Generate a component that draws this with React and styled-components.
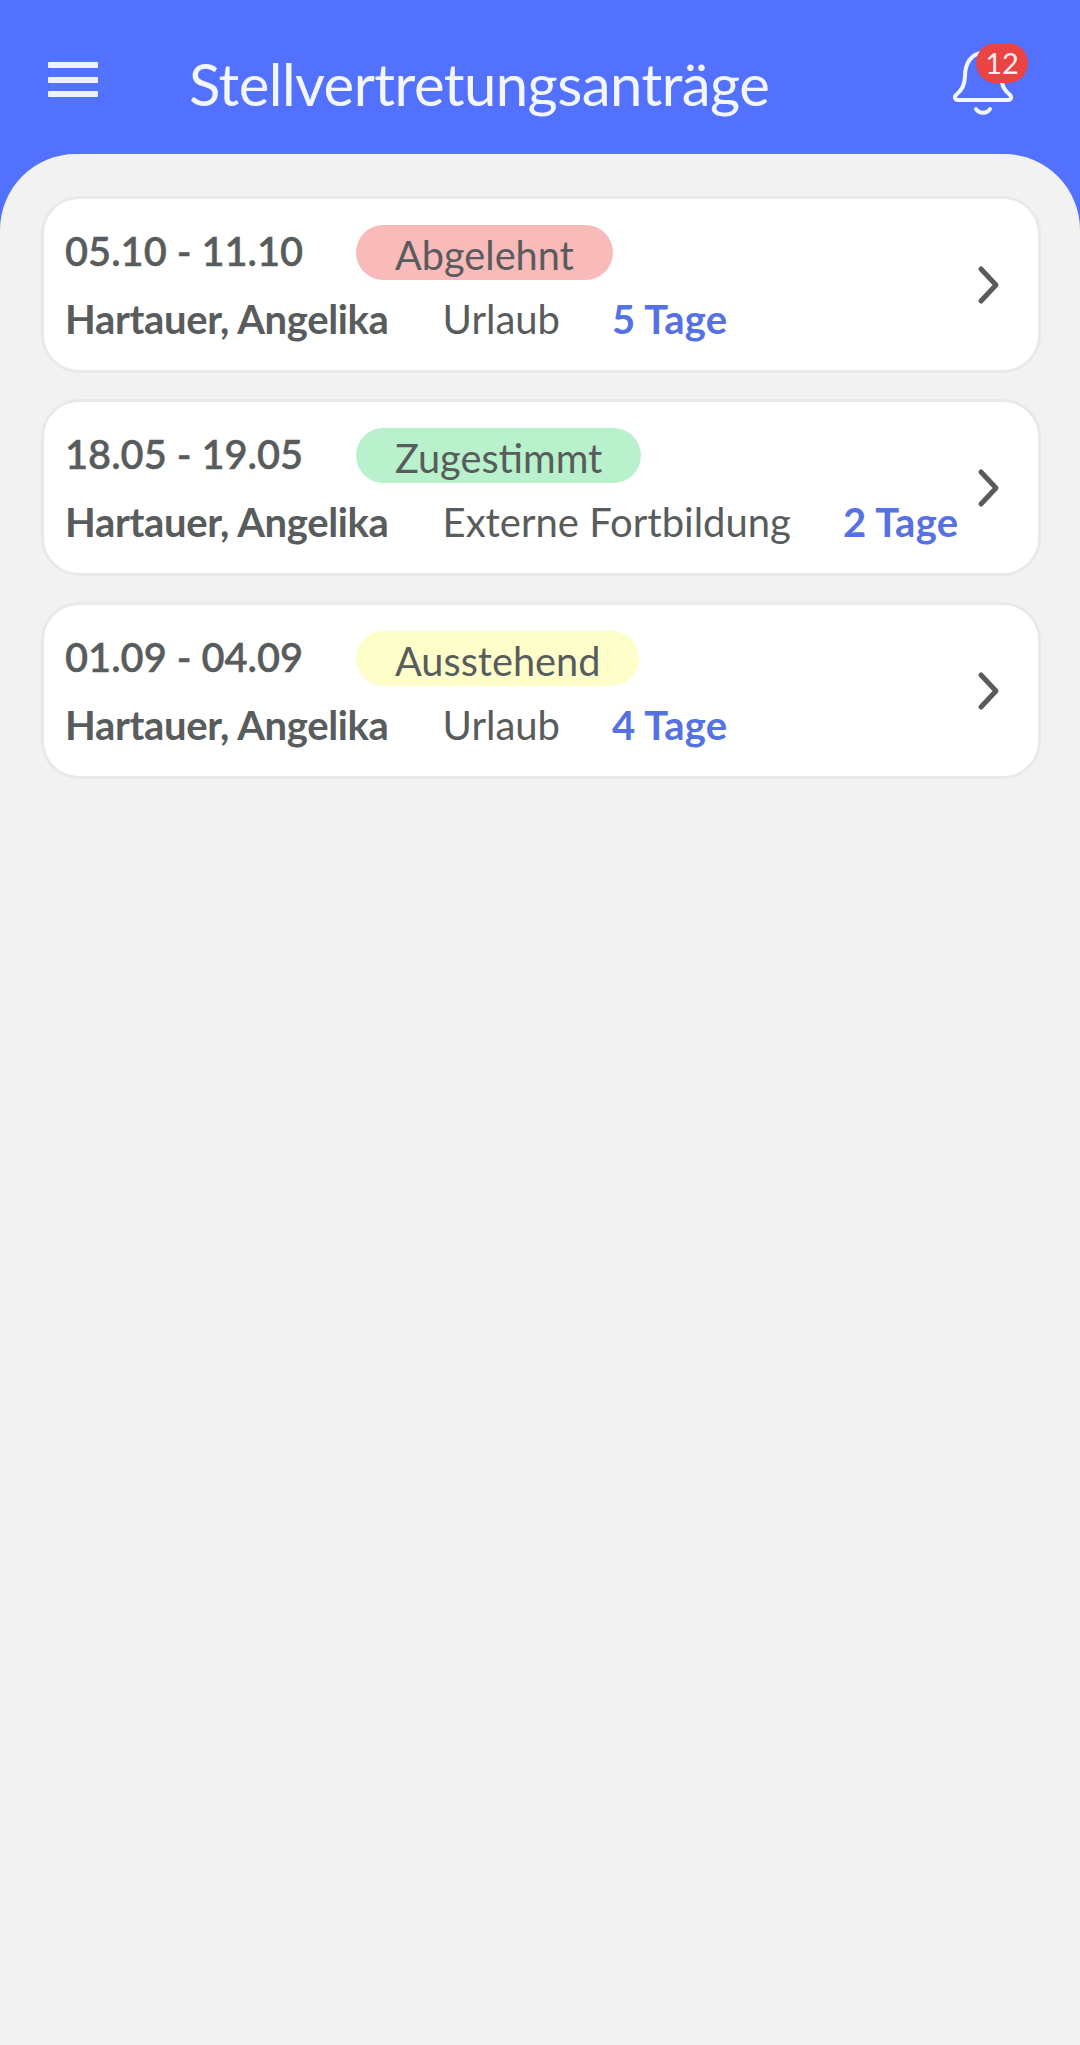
import React from "react";
import styled, { createGlobalStyle } from "styled-components";

const Global = createGlobalStyle`
  html, body { margin: 0; padding: 0; background: #f2f2f2; }
  body { font-family: Lato, "Open Sans", sans-serif; }
`;

const Page = styled.div`
  width: 1080px;
  height: 2045px;
  background: #5271ff;
  display: flex;
  flex-direction: column;
  overflow: hidden;
`;

const Header = styled.header`
  height: 154px;
  flex: none;
  display: flex;
  align-items: center;
  padding: 0 66px 0 48px;
  box-sizing: border-box;
  color: #f4f6ff;
`;

const MenuButton = styled.div`
  width: 50px;
  height: 35px;
  margin-top: 5px;
  flex: none;
  display: flex;
  flex-direction: column;
  justify-content: space-between;
`;

const MenuLine = styled.span`
  display: block;
  height: 6px;
  border-radius: 1px;
  background: #eef1ff;
`;

const Title = styled.h1`
  margin: 13px 0 0 91px;
  flex: 1;
  font-size: 58px;
  line-height: 70px;
  font-weight: 400;
  letter-spacing: -0.55px;
  white-space: nowrap;
`;

const Bell = styled.div`
  position: relative;
  width: 62px;
  height: 70px;
  margin-top: 11px;
  flex: none;
`;

const Badge = styled.span`
  position: absolute;
  top: -5px;
  right: -14px;
  width: 52px;
  height: 40px;
  border-radius: 20px;
  background: #ea4343;
  color: #fbeeee;
  font-size: 29px;
  line-height: 40px;
  text-align: center;
`;

const Panel = styled.main`
  flex: 1;
  background: #f2f2f2;
  border-radius: 76px 76px 0 0;
  padding: 42px 39px 0 41px;
  display: flex;
  flex-direction: column;
  gap: 26px;
`;

const Card = styled.article`
  height: 177px;
  box-sizing: border-box;
  background: #fff;
  border: 3px solid #e9e9e9;
  border-radius: 38px;
  padding: 0 37px 0 21px;
  display: flex;
  align-items: center;
  color: #585c5c;
`;

const CardBody = styled.div`
  flex: 1;
  align-self: flex-start;
  padding-top: 26px;
  display: flex;
  flex-direction: column;
  gap: 14px;
`;

const TopRow = styled.div`
  display: flex;
  align-items: center;
  height: 55px;
`;

const DateText = styled.span`
  width: 291px;
  font-size: 39.8px;
  font-weight: 600;
  line-height: 50px;
  margin-top: -3px;
  -webkit-text-stroke: 0.35px #585c5c;
`;

const Status = styled.span`
  height: 55px;
  padding: 0 39px;
  border-radius: 28px;
  background: ${(p) => p.$bg};
  font-size: 39.7px;
  line-height: 59px;
`;

const BottomRow = styled.div`
  display: flex;
  gap: 54px;
  height: 50px;
  align-items: center;
  font-size: 40px;
  white-space: nowrap;
`;

const Name = styled.span`
  font-weight: 700;
  letter-spacing: -0.35px;
`;

const Kind = styled.span`
  font-weight: 400;
`;

const Days = styled.span`
  margin-left: -2px;
  font-weight: 700;
  color: #5671e4;
  letter-spacing: 0.3px;
`;

const Chevron = styled.svg`
  width: 26px;
  height: 40px;
  flex: none;
`;

const items = [
  { date: "05.10 - 11.10", status: "Abgelehnt", bg: "#f9baba", kind: "Urlaub", days: "5 Tage" },
  { date: "18.05 - 19.05", status: "Zugestimmt", bg: "#b8f1cb", kind: "Externe Fortbildung", days: "2 Tage" },
  { date: "01.09 - 04.09", status: "Ausstehend", bg: "#fefecb", kind: "Urlaub", days: "4 Tage" },
];

export default function App() {
  return (
    <Page>
      <Global />
      <Header>
        <MenuButton>
          <MenuLine />
          <MenuLine />
          <MenuLine />
        </MenuButton>
        <Title>Stellvertretungsanträge</Title>
        <Bell>
          <svg width="62" height="70" viewBox="0 0 62 70" fill="none" stroke="#f4f6ff" strokeWidth="4" strokeLinecap="round" strokeLinejoin="round">
            <path d="M31 5C19 5 13 16 13 28C13 38 9 43 4 47C2 49 3 52 6 52H56C59 52 60 49 58 47C53 43 49 38 49 28C49 16 43 5 31 5Z" />
            <path d="M24 61C27 66 35 66 38 61" />
          </svg>
          <Badge>12</Badge>
        </Bell>
      </Header>
      <Panel>
        {items.map((it) => (
          <Card key={it.date}>
            <CardBody>
              <TopRow>
                <DateText>{it.date}</DateText>
                <Status $bg={it.bg}>{it.status}</Status>
              </TopRow>
              <BottomRow>
                <Name>Hartauer, Angelika</Name>
                <Kind>{it.kind}</Kind>
                <Days>{it.days}</Days>
              </BottomRow>
            </CardBody>
            <Chevron viewBox="0 0 26 40" fill="none" stroke="#585c5c" strokeWidth="5" strokeLinecap="round" strokeLinejoin="round">
              <path d="M6 4L21 20L6 36" />
            </Chevron>
          </Card>
        ))}
      </Panel>
    </Page>
  );
}
